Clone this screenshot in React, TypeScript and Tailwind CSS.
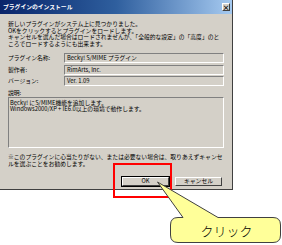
import React from 'react';

const FONT = "font-['Noto_Sans_CJK_JP','Noto_Sans',sans-serif]";

// 読み取り専用の入力欄 (くぼんだ枠)
function Field({ children }: { children: React.ReactNode }) {
  return (
    <div className="flex h-[10px] items-center border border-t-[#808080] border-l-[#808080] border-r-white border-b-white bg-[#d4d0c8] pl-[2px] leading-none whitespace-nowrap">
      {children}
    </div>
  );
}

function Button({ children, primary }: { children: React.ReactNode; primary?: boolean }) {
  return (
    <div className={primary ? 'border border-black' : 'border border-transparent'}>
      <div className="flex h-[9px] w-[47px] items-center justify-center border border-t-white border-l-white border-r-[#404040] border-b-[#404040] bg-[#d4d0c8] leading-none">
        {children}
      </div>
    </div>
  );
}

export default function App() {
  return (
    <div className={`relative h-[245px] w-[282px] overflow-hidden bg-white text-black ${FONT}`}>
      {/* ダイアログ本体 */}
      <div className="flex h-[190px] w-[233px] flex-col border-r border-b border-r-[#404040] border-b-[#404040] bg-[#d4d0c8] text-[5.8px]">
        {/* タイトルバー */}
        <div className="flex h-[14px] items-center justify-between bg-gradient-to-r from-[#0a246a] via-[#2f5f9e] to-[#a6caf0] pr-[2px] pl-[3px]">
          <span className="font-bold text-white leading-none">プラグインのインストール</span>
          <div className="flex h-[8px] w-[8px] items-center justify-center border border-t-white border-l-white border-r-[#404040] border-b-[#404040] bg-[#d4d0c8] text-[7px] leading-none font-bold">
            ×
          </div>
        </div>

        <div className="flex flex-col px-[8px] pt-[7px]">
          {/* 説明文 */}
          <p className="leading-[6.5px] whitespace-nowrap">
            新しいプラグインがシステム上に見つかりました。
            <br />
            OKをクリックするとプラグインをロードします。
            <br />
            キャンセルを選んだ場合はロードされませんが、「全般的な設定」の「高度」のと
            <br />
            ころでロードするようにも出来ます。
          </p>

          {/* 情報欄 */}
          <div className="mt-[6px] grid grid-cols-[56px_1fr] items-center gap-y-[1.5px]">
            <span className="leading-none">プラグイン名称:</span>
            <Field>Becky! S/MIME プラグイン</Field>
            <span className="leading-none">製作者:</span>
            <Field>RimArts, Inc.</Field>
            <span className="leading-none">バージョン:</span>
            <Field>Ver. 1.09</Field>
          </div>

          <span className="mt-[3.5px] leading-[6.5px]">説明:</span>
          <div className="mt-[1px] h-[51px] border border-t-[#808080] border-l-[#808080] border-r-white border-b-white pt-[1.5px] pl-[1px] leading-[6px] whitespace-nowrap">
            Becky! にS/MIME機能を追加します。
            <br />
            Windows2000/XP + IE6.0以上の環境で動作します。
          </div>

          <p className="mt-[4.5px] leading-[7px] whitespace-nowrap">
            ※このプラグインに心当たりがない、または必要ない場合は、取りあえずキャンセ
            <br />
            ルを選ぶことをお勧めします。
          </p>

          {/* ボタン */}
          <div className="mt-[9px] mr-[1px] flex justify-end gap-[4px]">
            <Button primary>OK</Button>
            <Button>キャンセル</Button>
          </div>
        </div>
      </div>

      {/* 赤枠の注記 */}
      <div className="absolute top-[163px] left-[113px] h-[35px] w-[59px] border-2 border-[#ff0000]" />

      {/* 吹き出し */}
      <svg className="absolute top-0 left-0" width="282" height="245" viewBox="0 0 282 245">
        <path
          d="M178 217.5 L183 217.5 L157.5 182 L218 217.5 L273 217.5 Q280.5 217.5 280.5 225 L280.5 235 Q280.5 242.5 273 242.5 L178 242.5 Q170.5 242.5 170.5 235 L170.5 225 Q170.5 217.5 178 217.5 Z"
          fill="#ffff99"
          stroke="#404040"
          strokeWidth="1"
        />
      </svg>
      <div className="absolute top-[217px] left-[170px] flex h-[26px] w-[111px] items-center justify-center pt-[1px] pl-[2px] text-[13px] leading-none font-light">
        クリック
      </div>
    </div>
  );
}
